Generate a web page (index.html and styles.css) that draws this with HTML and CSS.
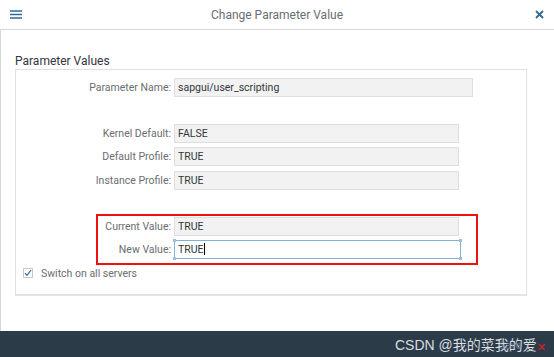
FILE: index.html
```html
<!DOCTYPE html>
<html lang="en">
<head>
    <meta charset="UTF-8">
    <meta name="viewport" content="width=device-width, initial-scale=1.0">
    <title>Change Parameter Value</title>
    <link rel="stylesheet" href="styles.css">
</head>
<body>
    <div class="dialog">
        <header class="dlg-header">
            <span class="icon-btn">
                <svg width="12" height="9" viewBox="0 0 12 9"><path d="M0 1h12M0 4.5h12M0 8h12" stroke="#2d6a97" stroke-width="1.6"/></svg>
            </span>
            <h1 class="dlg-title">Change Parameter Value</h1>
            <span class="icon-btn">
                <svg width="9" height="9" viewBox="0 0 9 9"><path d="M1 1l7 7M8 1l-7 7" stroke="#2d6a97" stroke-width="1.8"/></svg>
            </span>
        </header>

        <main class="dlg-body">
            <h2 class="section-title">Parameter Values</h2>
            <div class="panel">
                <div class="form-row">
                    <label>Parameter Name:</label>
                    <div class="field wide">sapgui/user_scripting</div>
                </div>

                <div class="form-row gap-big">
                    <label>Kernel Default:</label>
                    <div class="field">FALSE</div>
                </div>
                <div class="form-row gap-4">
                    <label>Default Profile:</label>
                    <div class="field">TRUE</div>
                </div>
                <div class="form-row gap-5">
                    <label>Instance Profile:</label>
                    <div class="field">TRUE</div>
                </div>

                <div class="form-row gap-big2">
                    <label>Current Value:</label>
                    <div class="field">TRUE</div>
                </div>
                <div class="form-row gap-4">
                    <label>New Value:</label>
                    <div class="field editable">TRUE<span class="caret"></span>
                        <i class="handle tl"></i><i class="handle tr"></i><i class="handle bl"></i><i class="handle br"></i>
                    </div>
                </div>

                <div class="highlight"></div>

                <div class="check-row">
                    <span class="checkbox">
                        <svg width="8" height="8" viewBox="0 0 8 8"><path d="M1 4.2l2 2.2L7 1.2" fill="none" stroke="#2d6a97" stroke-width="1.2"/></svg>
                    </span>
                    <span>Switch on all servers</span>
                </div>
            </div>
        </main>

        <footer class="dlg-footer">
            <span class="save-ghost">Save</span>
            <span class="watermark">CSDN @我的菜我的爱</span>
            <span class="red-x">✕</span>
        </footer>
    </div>
</body>
</html>
```

FILE: styles.css
```css
body {
    margin: 0;
    padding: 0;
    font-family: Roboto, 'Liberation Sans', Arial, sans-serif;
    background: #fff;
    color: #32363a;
}

.dialog {
    width: 554px;
    height: 357px;
    display: flex;
    flex-direction: column;
    overflow: hidden;
}

.dlg-header {
    height: 29px;
    border-bottom: 1px solid #d9d9d9;
    display: flex;
    align-items: center;
    justify-content: space-between;
    padding: 0 10px 0 10px;
}

.icon-btn {
    display: flex;
    align-items: center;
    width: 12px;
    height: 12px;
}

.dlg-header .icon-btn:last-child {
    justify-content: flex-end;
}

.dlg-title {
    margin: 0;
    font-size: 12px;
    font-weight: normal;
    color: #6a6d70;
}

.dlg-body {
    flex: 1;
    border-left: 1px solid #d6d6d6;
    padding-left: 14px;
}

.section-title {
    margin: 0;
    padding-top: 23px;
    height: 16px;
    line-height: 16px;
    font-size: 12px;
    font-weight: normal;
    color: #32363a;
}

.panel {
    position: relative;
    width: 510px;
    border: 1px solid #e0e0e0;
    border-bottom: 2px solid #e4e4e4;
    padding: 8px 0 14px 0;
}

.form-row {
    display: flex;
    align-items: center;
    height: 19px;
}

.form-row label {
    width: 155px;
    margin-right: 3px;
    text-align: right;
    font-size: 10.5px;
    color: #6a6d70;
}

.gap-big { margin-top: 27px; }
.gap-big2 { margin-top: 27px; }
.gap-4 { margin-top: 4px; }
.gap-5 { margin-top: 5px; }

.field {
    position: relative;
    box-sizing: border-box;
    width: 285px;
    height: 19px;
    line-height: 17px;
    padding-left: 3px;
    background: #f2f2f2;
    border: 1px solid #dedede;
    font-size: 10.5px;
    color: #32363a;
}

.field.wide {
    width: 299px;
}

.field.editable {
    width: 287px;
    background: #fff;
    border-color: #7fb3d5;
}

.caret {
    display: inline-block;
    width: 1px;
    height: 12px;
    background: #000;
    vertical-align: -2px;
}

.handle {
    position: absolute;
    width: 3px;
    height: 3px;
    background: #9cc1da;
}

.handle.tl { top: -2px; left: -2px; }
.handle.tr { top: -2px; right: -2px; }
.handle.bl { bottom: -2px; left: -2px; }
.handle.br { bottom: -2px; right: -2px; }

.highlight {
    position: absolute;
    left: 80px;
    top: 144px;
    width: 382px;
    height: 51px;
    box-sizing: border-box;
    border: 2px solid #f01010;
    pointer-events: none;
}

.check-row {
    display: flex;
    align-items: center;
    gap: 8px;
    margin-top: 7px;
    padding-left: 7px;
    height: 14px;
    font-size: 10.5px;
    color: #6a6d70;
}

.checkbox {
    box-sizing: border-box;
    width: 10px;
    height: 10px;
    border: 1px solid #c8c8c8;
    display: flex;
    align-items: center;
    justify-content: center;
}

.dlg-footer {
    position: relative;
    height: 26px;
    background: #2c3b48;
    display: flex;
    align-items: center;
    justify-content: flex-end;
    padding-right: 8px;
}

.watermark {
    font-family: 'Liberation Sans', 'Noto Sans CJK SC', sans-serif;
    font-size: 14px;
    color: #d9dde0;
}

.save-ghost {
    position: absolute;
    right: 33px;
    top: 9px;
    font-size: 10px;
    color: #6f8eaa;
    opacity: 0.7;
}

.red-x {
    font-family: 'DejaVu Sans', sans-serif;
    font-size: 11px;
    font-weight: bold;
    color: #e02020;
    margin-left: 0;
    margin-top: 6px;
}
```
